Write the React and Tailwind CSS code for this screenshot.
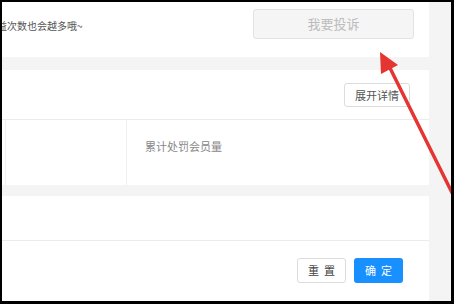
import React from "react";

export default function App() {
  const font = { fontFamily: '"Noto Sans CJK SC", "Noto Sans", sans-serif' };
  return (
    <div
      className="relative w-[454px] h-[304px] overflow-hidden bg-[#f4f4f4] border-t-2 border-l-2 border-r-[3px] border-b-[3px] border-black flex"
      style={font}
    >
      <div className="w-[427px] flex flex-col">
        {/* panel 1 */}
        <div className="h-[55px] bg-white flex items-start justify-between pt-[7px] pr-[15px] overflow-hidden">
          <div className="h-[32px] flex items-center -ml-[5px] text-[10px] text-[#555] whitespace-nowrap">
            益次数也会越多哦~
          </div>
          <button className="w-[161px] h-[30px] rounded-[3px] bg-[#f5f5f5] border border-[#e3e3e3] text-[13px] text-[#bcbcbc] flex items-center justify-center">
            我要投诉
          </button>
        </div>
        <div className="h-[13px]" />
        {/* panel 2 */}
        <div className="h-[115px] bg-white flex flex-col">
          <div className="h-[50px] border-b border-[#ececec] flex items-start justify-end pt-[13px] pr-[19px]">
            <button className="w-[66px] h-[24px] rounded-[3px] bg-white border border-[#dcdcdc] text-[11px] text-[#555] flex items-center justify-center">
              展开详情
            </button>
          </div>
          <div className="flex-1 flex">
            <div className="w-[122px] border-r border-l border-[#f1f1f1] ml-[3px]" />
            <div className="flex-1 pl-[18px] pt-[19px] text-[11px] text-[#888] leading-[14px]">
              累计处罚会员量
            </div>
          </div>
        </div>
        <div className="h-[11px]" />
        {/* panel 3 */}
        <div className="flex-1 bg-white flex flex-col">
          <div className="h-[45px] border-b border-[#ececec]" />
          <div className="flex justify-end gap-[8px] pt-[17px] pr-[26px]">
            <button className="w-[49px] h-[25px] rounded-[3px] bg-white border border-[#dcdcdc] text-[11px] text-[#444] tracking-[5px] pl-[5px] flex items-center justify-center">
              重置
            </button>
            <button className="w-[49px] h-[25px] rounded-[3px] bg-[#1890ff] text-[11px] text-white tracking-[5px] pl-[5px] flex items-center justify-center">
              确定
            </button>
          </div>
        </div>
      </div>
      <div className="flex-1" />
      {/* red arrow overlay */}
      <svg className="absolute left-0 top-0" width="454" height="304" viewBox="0 0 454 304">
        <line x1="387" y1="64" x2="480" y2="251" stroke="#e53532" strokeWidth="3.5" strokeLinecap="round" />
        <polygon points="378,50 379,72 396,63" fill="#e53532" />
      </svg>
    </div>
  );
}
